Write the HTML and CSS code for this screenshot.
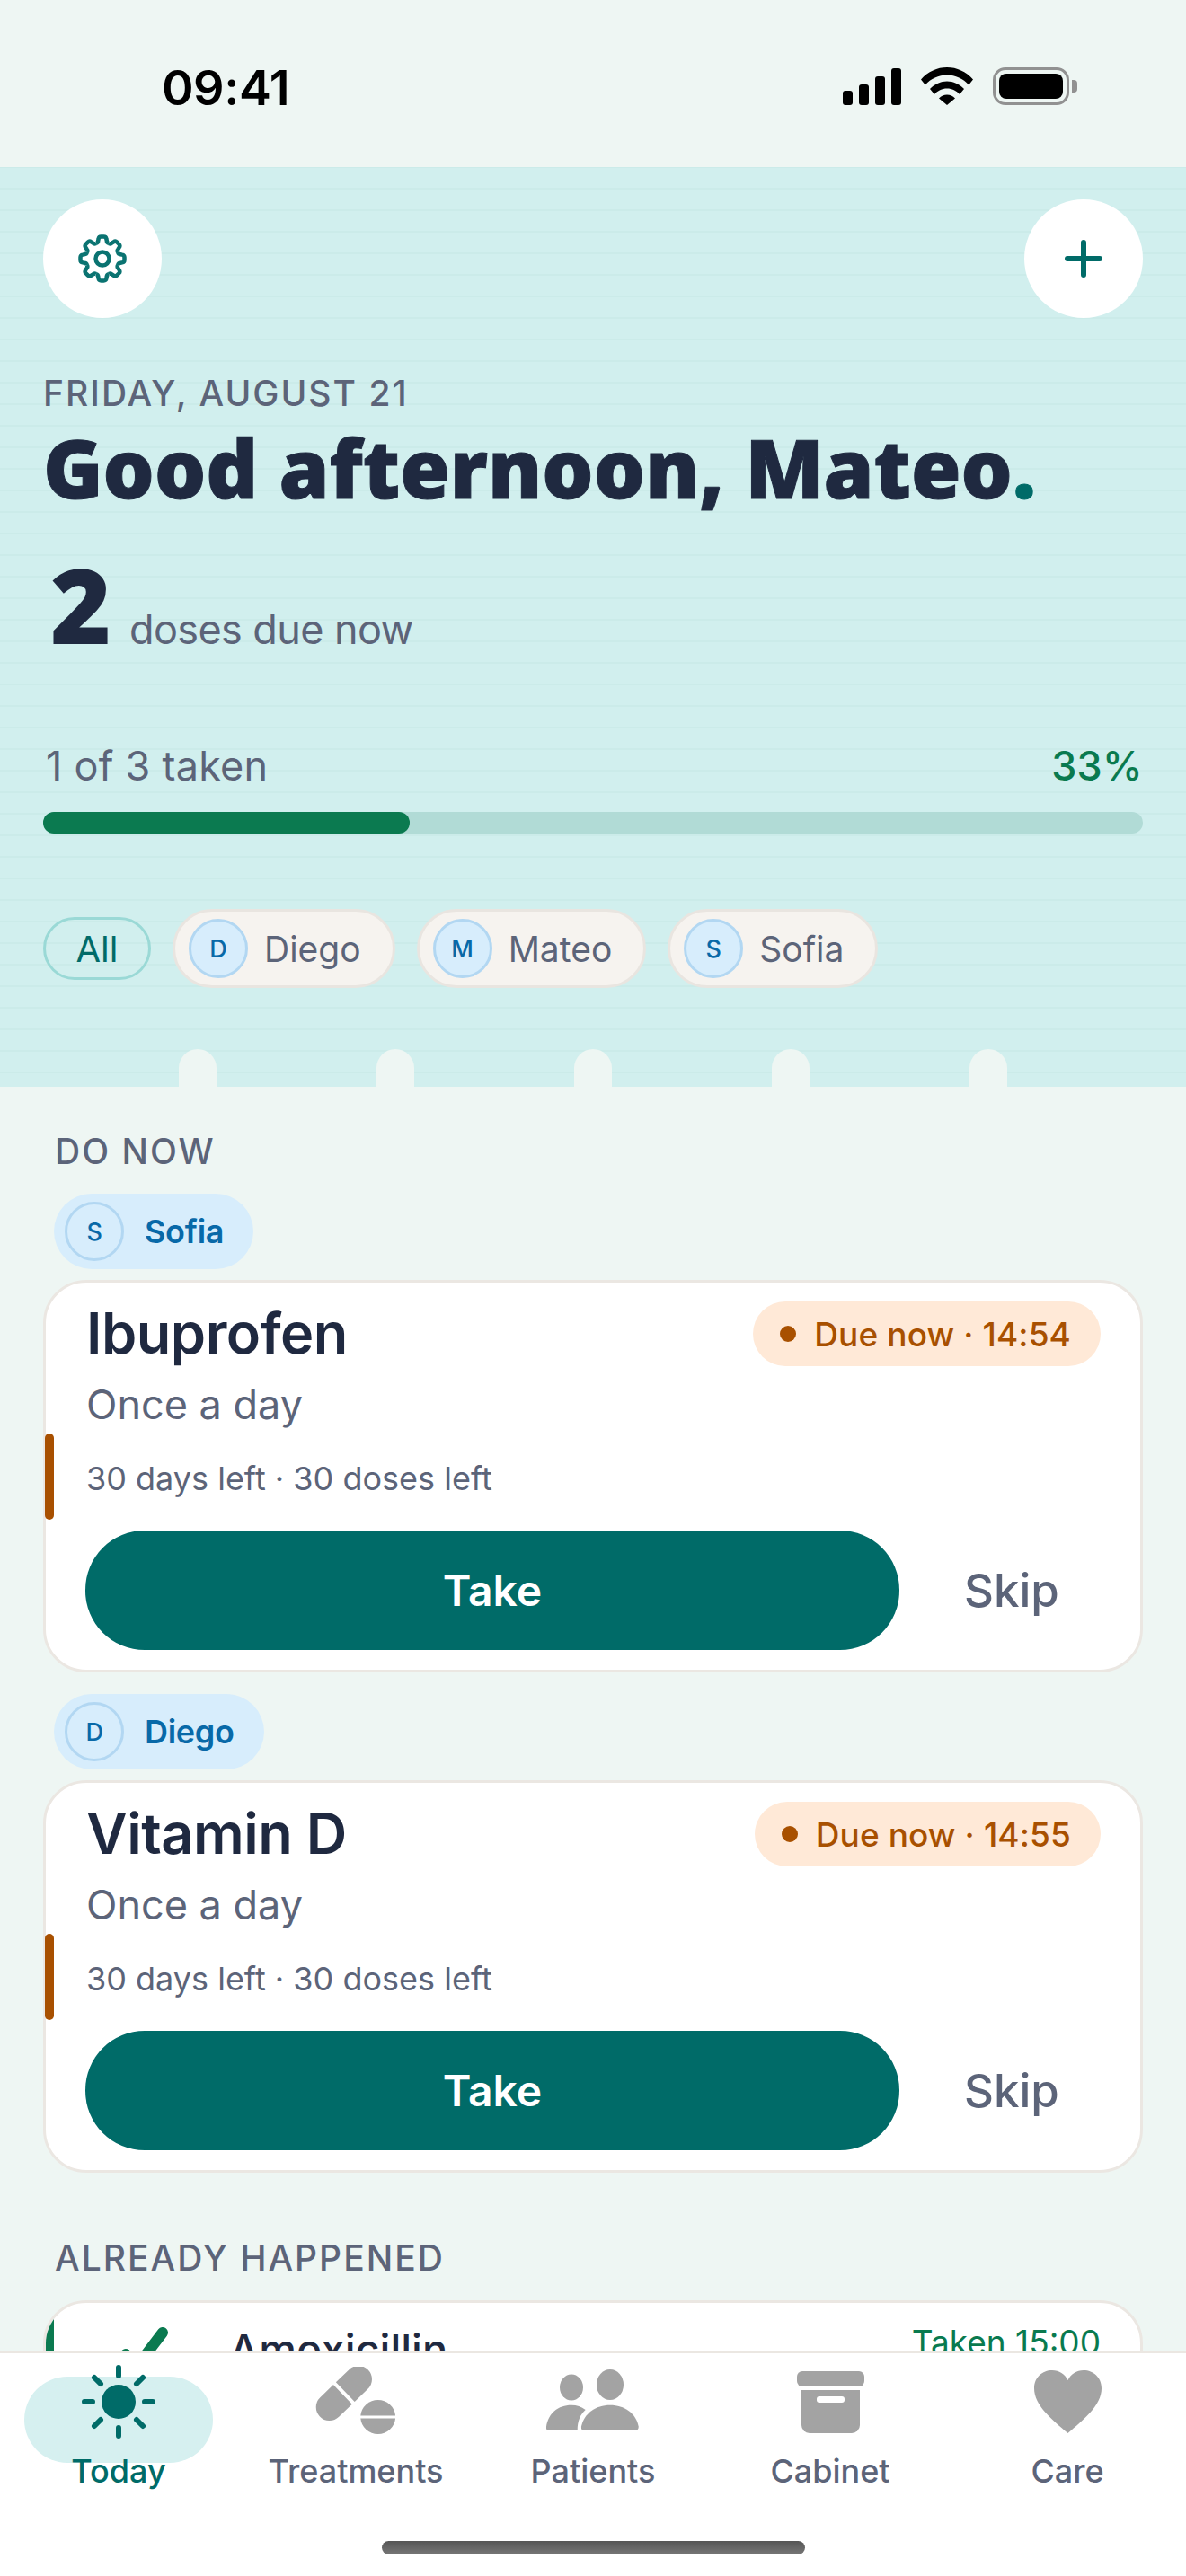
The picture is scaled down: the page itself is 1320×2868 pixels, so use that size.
FILE: index.html
```html
<!DOCTYPE html>
<html lang="en">
<head>
    <meta charset="UTF-8">
    <meta name="viewport" content="width=device-width, initial-scale=1.0">
    <title>Today</title>
    <link rel="stylesheet" href="styles.css">
</head>
<body>
    <div class="phone">
        <div class="status">
            <span class="clock">09:41</span>
            <div class="status-icons">
                <div class="signal">
                    <i class="s1"></i><i class="s2"></i><i class="s3"></i><i class="s4"></i>
                </div>
                <svg class="wifi" width="58" height="42" viewBox="0 0 58 42">
                    <path d="M29 0C18 0 8 4.500 0 13.500L4.800 19.500C11 12.500 19.500 8.500 29 8.500S47 12.500 53.200 19.500L58 13.500C50 4.500 40 0 29 0Z"/>
                    <path d="M29 15.500C22 15.500 15.500 18.500 10 24L15 30C18.500 26 23.500 23.500 29 23.500S39.500 26 43 30L48 24C42.500 18.500 36 15.500 29 15.500Z"/>
                    <path d="M29 30.500C25.500 30.500 22.500 32 20 34.500L29 42L38 34.500C35.500 32 32.500 30.500 29 30.500Z"/>
                </svg>
                <div class="battery">
                    <div class="battery-body"><div class="battery-fill"></div></div>
                    <div class="battery-nub"></div>
                </div>
            </div>
        </div>

        <header class="hero">
            <div class="hero-top">
                <button class="round-btn">
                    <svg width="54" height="54" viewBox="-27 -27 54 54" fill="none" stroke="#0a7371" stroke-width="4.500" stroke-linejoin="round">
                        <defs>
                            <path id="tooth" d="M-7.080 -17.090Q-4.800 -17.800 -4.800 -20L-4.400 -22Q-4 -24.500 -1.500 -24.500L1.500 -24.500Q4 -24.500 4.400 -22L4.800 -20Q4.800 -17.800 7.080 -17.090"/>
                        </defs>
                        <use href="#tooth"/>
                        <use href="#tooth" transform="rotate(45)"/>
                        <use href="#tooth" transform="rotate(90)"/>
                        <use href="#tooth" transform="rotate(135)"/>
                        <use href="#tooth" transform="rotate(180)"/>
                        <use href="#tooth" transform="rotate(225)"/>
                        <use href="#tooth" transform="rotate(270)"/>
                        <use href="#tooth" transform="rotate(315)"/>
                        <circle r="7.500"/>
                    </svg>
                </button>
                <button class="round-btn">
                    <svg width="48" height="48" viewBox="0 0 48 48" fill="none" stroke="#006b68" stroke-width="6" stroke-linecap="round">
                        <path d="M24 6V42M6 24H42"/>
                    </svg>
                </button>
            </div>
            <div class="date">FRIDAY, AUGUST 21</div>
            <h1 class="greeting">Good afternoon, Mateo<span class="dot">.</span></h1>
            <div class="due">
                <span class="due-count">2</span>
                <span class="due-text">doses due now</span>
            </div>
            <div class="progress-row">
                <span>1 of 3 taken</span>
                <span class="percent">33%</span>
            </div>
            <div class="progress"><div class="progress-fill" style="width: 33.33%"></div></div>
            <div class="chips">
                <div class="chip-all">All</div>
                <div class="chip"><span class="avatar">D</span>Diego</div>
                <div class="chip"><span class="avatar">M</span>Mateo</div>
                <div class="chip"><span class="avatar">S</span>Sofia</div>
            </div>
            <div class="bumps">
                <i></i><i></i><i></i><i></i><i></i>
            </div>
        </header>

        <main class="content">
            <div class="section-label">DO NOW</div>

            <div class="person"><span class="avatar">S</span>Sofia</div>
            <div class="card">
                <div class="accent"></div>
                <div class="card-head">
                    <div class="med-name">Ibuprofen</div>
                    <div class="badge"><i></i>Due now · 14:54</div>
                </div>
                <div class="freq">Once a day</div>
                <div class="left">30 days left · 30 doses left</div>
                <div class="actions">
                    <button class="take">Take</button>
                    <button class="skip">Skip</button>
                </div>
            </div>

            <div class="person"><span class="avatar">D</span>Diego</div>
            <div class="card">
                <div class="accent"></div>
                <div class="card-head">
                    <div class="med-name">Vitamin D</div>
                    <div class="badge"><i></i>Due now · 14:55</div>
                </div>
                <div class="freq">Once a day</div>
                <div class="left">30 days left · 30 doses left</div>
                <div class="actions">
                    <button class="take">Take</button>
                    <button class="skip">Skip</button>
                </div>
            </div>

            <div class="section-label">ALREADY HAPPENED</div>
            <div class="done-card">
                <div class="done-bar"></div>
                <svg class="check" width="72" height="60" viewBox="0 0 72 60" fill="none" stroke="#0b7a50" stroke-width="12" stroke-linecap="round" stroke-linejoin="round">
                    <path d="M20 37L29 55L61 13"/>
                </svg>
                <div class="done-name">Amoxicillin</div>
                <div class="done-time">Taken 15:00</div>
            </div>
        </main>

        <nav class="tabs">
            <div class="tab active">
                <div class="tab-icon">
                    <svg width="84" height="84" viewBox="-42 -42 84 84" fill="none" stroke="#006b68" stroke-width="6" stroke-linecap="round">
                        <circle r="19" fill="#006b68" stroke="none"/>
                        <path d="M0 -38V-29M0 29V38M-38 0H-29M29 0H38M-27 -27L-20 -20M27 -27L20 -20M-27 27L-20 20M27 27L20 20"/>
                    </svg>
                </div>
                <span>Today</span>
            </div>
            <div class="tab">
                <div class="tab-icon">
                    <svg width="90" height="78" viewBox="0 0 90 78" fill="#a3a3a3">
                        <g transform="translate(31.850 29.500) rotate(-44)">
                            <path d="M-2 -15H-22.400A15 15 0 0 0 -22.400 15H-2Z"/>
                            <path d="M2 -15H22.400A15 15 0 0 1 22.400 15H2Z"/>
                        </g>
                        <path d="M50.300 54.500A19.500 19.500 0 0 1 89.100 54.500Z"/>
                        <path d="M50.300 57.500H89.100A19.500 19.500 0 0 1 50.300 57.500Z"/>
                    </svg>
                </div>
                <span>Treatments</span>
            </div>
            <div class="tab">
                <div class="tab-icon">
                    <svg width="106" height="78" viewBox="0 0 106 78" fill="#a3a3a3">
                        <ellipse cx="29" cy="23" rx="13" ry="14.500"/>
                        <ellipse cx="72" cy="20" rx="15" ry="17"/>
                        <path d="M3.700 71C1.500 71 0.700 69.500 1 67C3 52 14 42.700 29 42.700C35 42.700 40 44.500 44.700 48C39 53 35.700 60 35.700 71Z"/>
                        <path d="M43 71C40.500 71 39.500 69 40 66.500C43 52 56 42.700 72 42.700C88 42.700 101 52 103.700 66.500C104 69 102.500 71 100 71Z"/>
                    </svg>
                </div>
                <span>Patients</span>
            </div>
            <div class="tab">
                <div class="tab-icon">
                    <div class="box">
                        <div class="box-lid"></div>
                        <div class="box-body"><div class="box-slot"></div></div>
                    </div>
                </div>
                <span>Cabinet</span>
            </div>
            <div class="tab">
                <div class="tab-icon">
                    <svg width="75" height="70" viewBox="0 0 75 70" fill="#a3a3a3">
                        <path d="M37.500 70C20 55 0 39 0 20C0 8 9 0 20 0C28 0 34 4 37.500 11C41 4 47 0 55 0C66 0 75 8 75 20C75 39 55 55 37.500 70Z"/>
                    </svg>
                </div>
                <span>Care</span>
            </div>
            <div class="home-bar"></div>
        </nav>
    </div>
</body>
</html>
```

FILE: styles.css
```css
* {
    box-sizing: border-box;
}

body {
    margin: 0;
    font-family: Inter, "Liberation Sans", sans-serif;
    color: #1f2940;
    background: #eef6f3;
}

button {
    font-family: inherit;
    border: none;
}

.phone {
    width: 1320px;
    height: 2868px;
    display: flex;
    flex-direction: column;
    overflow: hidden;
    background: #eef6f3;
}

/* status bar */

.status {
    height: 186px;
    flex-shrink: 0;
    display: flex;
    justify-content: space-between;
    padding: 65px 121px 0 180px;
}

.clock {
    font-size: 54px;
    font-weight: 600;
    line-height: 65px;
    letter-spacing: -0.500px;
    color: #000;
}

.status-icons {
    display: flex;
    align-items: flex-end;
    height: 42px;
    margin-top: 10px;
}

.signal {
    display: flex;
    align-items: flex-end;
    gap: 7px;
    height: 42px;
    margin-right: 22px;
}

.signal i {
    display: block;
    width: 11px;
    background: #000;
    border-radius: 3px;
}

.s1 { height: 16px; }
.s2 { height: 23px; }
.s3 { height: 32px; }
.s4 { height: 41px; }

.wifi {
    margin-right: 22px;
}

.battery {
    display: flex;
    align-items: center;
    gap: 3px;
}

.battery-body {
    width: 85px;
    height: 42px;
    padding: 4px;
    border: 3px solid #919191;
    border-radius: 14px;
}

.battery-fill {
    height: 100%;
    background: #000;
    border-radius: 8px;
}

.battery-nub {
    width: 6px;
    height: 14px;
    background: #919191;
    border-radius: 0 4px 4px 0;
}

/* hero */

.hero {
    height: 1024px;
    flex-shrink: 0;
    display: flex;
    flex-direction: column;
    padding: 36px 48px 0;
    background-color: #d1efee;
    background-image: repeating-linear-gradient(180deg, #cbebe9 0, #cbebe9 1px, transparent 1px, transparent 23px, #cbebe9 23px, #cbebe9 24px);
}

.hero-top {
    display: flex;
    justify-content: space-between;
}

.round-btn {
    width: 132px;
    height: 132px;
    padding: 0;
    border-radius: 50%;
    background: #fff;
    display: flex;
    align-items: center;
    justify-content: center;
}

.date {
    margin-top: 61px;
    font-size: 39px;
    font-weight: 500;
    line-height: 46px;
    letter-spacing: 2px;
    color: #5c6479;
}

.greeting {
    margin: 9px 0 0;
    font-family: "Noto Sans", sans-serif;
    font-size: 90px;
    font-weight: 900;
    line-height: 100px;
    color: #1f2940;
    -webkit-text-stroke: 1px #1f2940;
    white-space: nowrap;
}

.greeting .dot {
    color: #006b68;
    -webkit-text-stroke: 1px #006b68;
}

.due {
    display: flex;
    align-items: baseline;
    margin-top: 42px;
    padding-left: 8px;
}

.due-count {
    font-family: "Noto Sans", sans-serif;
    font-size: 116px;
    font-weight: 900;
    line-height: 120px;
    margin-right: 20px;
}

.due-text {
    font-size: 45px;
    letter-spacing: -0.600px;
    color: #5c6479;
}

.progress-row {
    display: flex;
    justify-content: space-between;
    margin-top: 95px;
    font-size: 45px;
    line-height: 52px;
    letter-spacing: 0.250px;
    color: #5c6479;
    padding: 0 0 0 3px;
}

.percent {
    color: #0a7a4f;
    font-weight: 500;
}

.progress {
    height: 24px;
    margin-top: 25px;
    background: #b1dbd6;
    border-radius: 12px;
}

.progress-fill {
    height: 100%;
    background: #0b7a50;
    border-radius: 12px;
}

.chips {
    display: flex;
    align-items: center;
    gap: 24px;
    margin-top: 84px;
}

.chip-all {
    width: 120px;
    height: 70px;
    display: flex;
    align-items: center;
    justify-content: center;
    border: 3px solid #9ad9d6;
    border-radius: 35px;
    font-size: 40px;
    color: #006b68;
}

.chip {
    height: 88px;
    display: flex;
    align-items: center;
    gap: 18px;
    padding: 0 35px 0 15px;
    background: #f6f3ef;
    border: 3px solid #e9e5e0;
    border-radius: 44px;
    font-size: 39px;
    color: #5c6479;
}

.avatar {
    width: 66px;
    height: 66px;
    flex-shrink: 0;
    display: flex;
    align-items: center;
    justify-content: center;
    background: #d7edfc;
    border: 3px solid #b2d7f2;
    border-radius: 50%;
    font-size: 27px;
    font-weight: 500;
    color: #0869a8;
}

.bumps {
    display: flex;
    justify-content: space-between;
    margin: auto 151px 0;
}

.bumps i {
    display: block;
    width: 42px;
    height: 42px;
    background: #eef6f3;
    border-radius: 21px 21px 0 0;
}

/* list */

.content {
    flex: 1;
    min-height: 0;
    overflow: hidden;
    padding: 49px 48px 0;
}

.section-label {
    margin-bottom: 24px;
    padding-left: 13px;
    font-size: 39px;
    font-weight: 500;
    line-height: 46px;
    letter-spacing: 2px;
    color: #5c6479;
}

.person {
    display: flex;
    align-items: center;
    width: fit-content;
    height: 84px;
    margin: 0 0 12px 12px;
    padding: 0 33px 0 12px;
    gap: 23px;
    background: #d7edfc;
    border-radius: 42px;
    font-size: 36px;
    font-weight: 600;
    letter-spacing: -0.300px;
    color: #0869a8;
}

.card {
    position: relative;
    height: 437px;
    margin-bottom: 24px;
    padding: 21px 45px 0;
    background: #fff;
    border: 3px solid #ebe7e2;
    border-radius: 48px;
}

.card + .section-label {
    margin-top: 72px;
}

.accent {
    position: absolute;
    left: -1px;
    top: 168px;
    width: 10px;
    height: 96px;
    background: #a85000;
    border-radius: 5px;
}

.card-head {
    display: flex;
    justify-content: space-between;
    align-items: flex-start;
}

.med-name {
    font-size: 63px;
    font-weight: 600;
    line-height: 72px;
    letter-spacing: -0.500px;
    margin-top: -1px;
}

.badge {
    display: flex;
    align-items: center;
    gap: 20px;
    height: 72px;
    padding: 0 33px 0 30px;
    margin-right: -1px;
    background: #ffe9d7;
    border-radius: 36px;
    font-size: 37px;
    font-weight: 500;
    letter-spacing: 0.100px;
    color: #a85000;
    white-space: nowrap;
}

.badge i {
    display: block;
    width: 18px;
    height: 18px;
    border-radius: 50%;
    background: #a85000;
}

.freq {
    margin-top: 16px;
    font-size: 45px;
    line-height: 54px;
    color: #5c6479;
}

.left {
    margin-top: 32px;
    font-size: 36px;
    line-height: 46px;
    color: #5c6479;
}

.actions {
    display: flex;
    align-items: center;
    margin-top: 35px;
    margin-left: -1px;
}

.take {
    width: 906px;
    height: 133px;
    background: #006b68;
    border-radius: 66px;
    font-size: 48px;
    font-weight: 600;
    color: #fff;
}

.skip {
    margin-left: 72px;
    padding: 0;
    background: none;
    font-size: 51px;
    font-weight: 500;
    color: #5c6479;
}

.done-card {
    position: relative;
    display: flex;
    height: 240px;
    padding: 20px 44px 0 69px;
    background: #fff;
    border: 3px solid #ebe7e2;
    border-radius: 48px;
    overflow: hidden;
}

.done-bar {
    position: absolute;
    left: 0;
    top: 0;
    bottom: 0;
    width: 9px;
    background: #0b7a50;
}

.done-name {
    flex: 1;
    margin-left: 63px;
    font-size: 47px;
    font-weight: 500;
    line-height: 64px;
}

.done-time {
    font-size: 37px;
    line-height: 48px;
    color: #0a7a4f;
}

/* tab bar */

.tabs {
    position: relative;
    height: 250px;
    flex-shrink: 0;
    display: grid;
    grid-template-columns: repeat(5, 1fr);
    background: #fff;
    border-top: 2px solid #ebe7e2;
}

.tab {
    position: relative;
    display: flex;
    flex-direction: column;
    align-items: center;
    padding-top: 12px;
    font-size: 36px;
    font-weight: 500;
    color: #5c6479;
}

.tab-icon {
    position: relative;
    height: 84px;
    margin-bottom: 13px;
    display: flex;
    align-items: center;
    justify-content: center;
}

.tab span {
    position: relative;
    line-height: 44px;
}

.tab.active {
    color: #006b68;
}

.tab.active::before {
    content: "";
    position: absolute;
    left: 27px;
    top: 26px;
    width: 210px;
    height: 96px;
    background: #d6f0f0;
    border-radius: 48px;
}

.box {
    width: 75px;
}

.box-lid {
    height: 17px;
    background: #a3a3a3;
    border-radius: 6px;
}

.box-body {
    height: 48px;
    margin: 4px 5px 0;
    padding-top: 7px;
    background: #a3a3a3;
    border-radius: 0 0 9px 9px;
}

.box-slot {
    width: 31px;
    height: 7px;
    margin: 0 auto;
    background: #fff;
    border-radius: 3px;
}

.home-bar {
    position: absolute;
    left: 425px;
    bottom: 24px;
    width: 471px;
    height: 15px;
    background: linear-gradient(180deg, #555, #777);
    border-radius: 8px;
}
```
